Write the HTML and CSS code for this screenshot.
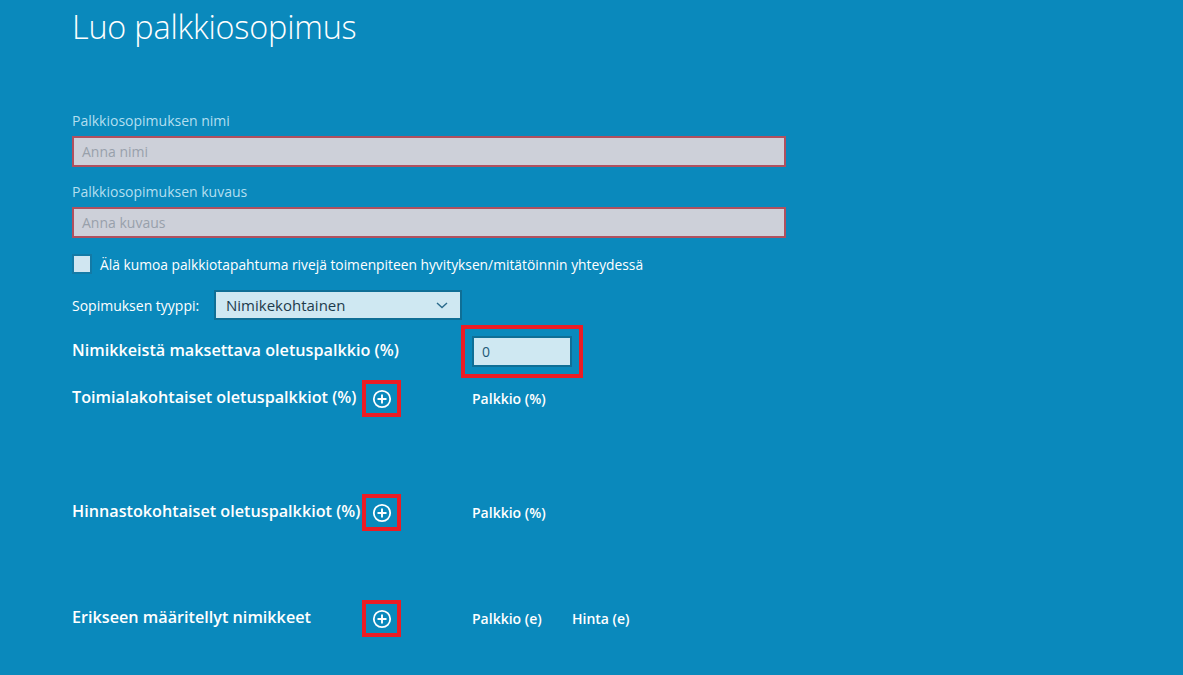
FILE: index.html
```html
<!DOCTYPE html>
<html lang="fi">
<head>
<meta charset="utf-8">
<title>Luo palkkiosopimus</title>
<link rel="stylesheet" href="styles.css">
</head>
<body>
<div class="page">
  <h1 class="title">Luo palkkiosopimus</h1>

  <div class="field first">
    <div class="field-label">Palkkiosopimuksen nimi</div>
    <div class="text-input invalid"><span class="placeholder">Anna nimi</span></div>
  </div>
  <div class="field">
    <div class="field-label">Palkkiosopimuksen kuvaus</div>
    <div class="text-input invalid"><span class="placeholder">Anna kuvaus</span></div>
  </div>

  <label class="check-row">
    <span class="checkbox"></span>
    <span class="check-text">Älä kumoa palkkiotapahtuma rivejä toimenpiteen hyvityksen/mitätöinnin yhteydessä</span>
  </label>

  <div class="type-row">
    <span class="type-label">Sopimuksen tyyppi:</span>
    <div class="select">
      <span>Nimikekohtainen</span>
      <svg class="chev" width="12" height="7" viewBox="0 0 12 7"><path d="M1 1 L6 5.5 L11 1" fill="none" stroke="#2b6b8c" stroke-width="1.4"/></svg>
    </div>
  </div>

  <div class="grid-row default-row">
    <span class="section-label">Nimikkeistä maksettava oletuspalkkio (%)</span>
    <span></span>
    <div class="cell"><div class="num-input">0</div></div>
  </div>

  <div class="grid-row sec sec-1">
    <span class="section-label">Toimialakohtaiset oletuspalkkiot (%)</span>
    <span class="plus-box"><svg width="20" height="20" viewBox="0 0 20 20"><circle cx="10" cy="10" r="8.2" fill="none" stroke="#fff" stroke-width="1.8"/><path d="M10 5.5 V14.5 M5.5 10 H14.5" stroke="#fff" stroke-width="1.9"/></svg></span>
    <div class="cell cols"><span class="col-head">Palkkio (%)</span></div>
  </div>

  <div class="grid-row sec sec-2">
    <span class="section-label">Hinnastokohtaiset oletuspalkkiot (%)</span>
    <span class="plus-box"><svg width="20" height="20" viewBox="0 0 20 20"><circle cx="10" cy="10" r="8.2" fill="none" stroke="#fff" stroke-width="1.8"/><path d="M10 5.5 V14.5 M5.5 10 H14.5" stroke="#fff" stroke-width="1.9"/></svg></span>
    <div class="cell cols"><span class="col-head">Palkkio (%)</span></div>
  </div>

  <div class="grid-row sec sec-3">
    <span class="section-label">Erikseen määritellyt nimikkeet</span>
    <span class="plus-box"><svg width="20" height="20" viewBox="0 0 20 20"><circle cx="10" cy="10" r="8.2" fill="none" stroke="#fff" stroke-width="1.8"/><path d="M10 5.5 V14.5 M5.5 10 H14.5" stroke="#fff" stroke-width="1.9"/></svg></span>
    <div class="cell cols"><span class="col-head w100">Palkkio (e)</span><span class="col-head">Hinta (e)</span></div>
  </div>
</div>
</body>
</html>
```

FILE: styles.css
```css
html, body {
  margin: 0;
  padding: 0;
  background: #0a89bc;
  height: 100%;
  overflow: hidden;
}
body {
  font-family: "Open Sans", "Noto Sans", sans-serif;
  color: #ffffff;
}
.page {
  padding-left: 72px;
  width: 714px;
}
.title {
  margin: 0;
  padding-top: 4px;
  font-size: 32.4px;
  font-weight: 300;
  line-height: 44px;
  letter-spacing: -0.2px;
  color: #ffffff;
}
.field.first { margin-top: 63px; }
.field { margin-bottom: 15px; }
.field-label {
  font-size: 14px;
  line-height: 20px;
  color: #b3dff0;
  margin-bottom: 5px;
}
.text-input {
  box-sizing: border-box;
  height: 31px;
  width: 714px;
  background: #cdd0d9;
  border: 2px solid #b0505e;
  display: flex;
  align-items: center;
  padding-left: 8px;
}
.placeholder {
  font-size: 14px;
  color: #98a0ab;
}
.check-row {
  display: flex;
  align-items: center;
  margin-top: 16px;
  height: 20px;
}
.checkbox {
  box-sizing: border-box;
  width: 20px;
  height: 20px;
  background: #d0e6f1;
  border: 2px solid #137aa6;
  margin-right: 8px;
}
.check-text {
  font-size: 13.8px;
  color: #ffffff;
}
.type-row {
  display: flex;
  align-items: center;
  margin-top: 16px;
}
.type-label {
  font-size: 14px;
  width: 142px;
}
.select {
  box-sizing: border-box;
  width: 248px;
  height: 30px;
  background: #cfe8f2;
  border: 2px solid #0f6f96;
  display: flex;
  align-items: center;
  justify-content: space-between;
  padding: 0 10px 0 10px;
  font-size: 15px;
  color: #1d3b4c;
}
.chev { margin-top: 1px; margin-right: 2px; }
.grid-row {
  display: grid;
  grid-template-columns: 290px 39px 1fr;
  align-items: center;
}
.cell { margin-left: 71px; }
.section-label {
  font-size: 16.2px;
  font-weight: 600;
  white-space: nowrap;
  padding-bottom: 3px;
}
.default-row {
  margin-top: 16px;
  height: 31px;
}
.num-input {
  box-sizing: border-box;
  width: 100px;
  height: 31px;
  background: #cfe8f2;
  border: 2px solid #0f6f96;
  outline: 4px solid #ec1c24;
  outline-offset: 7px;
  font-size: 14px;
  color: #1d5a78;
  padding-left: 8px;
  line-height: 27px;
}
.plus-box {
  box-sizing: border-box;
  width: 39px;
  height: 37px;
  border: 4px solid #ec1c24;
  display: flex;
  align-items: center;
  justify-content: center;
}
.cols { display: flex; }
.col-head {
  font-size: 14px;
  font-weight: 600;
  padding-bottom: 1px;
}
.w100 { width: 100px; }
.sec-1 { margin-top: 13px; }
.sec-2 { margin-top: 77px; }
.sec-3 { margin-top: 69px; }
```
